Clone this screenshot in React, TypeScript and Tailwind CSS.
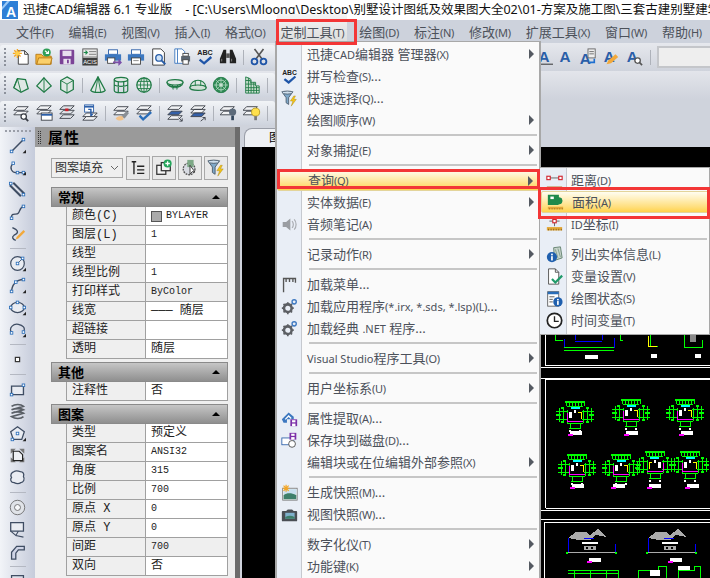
import type { ReactNode } from 'react';

const CJK = "font-['Noto_Sans','Noto_Sans_CJK_SC',sans-serif]";
const MONO = "font-['Liberation_Mono','Noto_Sans_CJK_SC',monospace]";

function Ic({ children, size = 20 }: { children: ReactNode; size?: number }) {
  return (
    <svg width={size} height={size} viewBox="0 0 20 20" fill="none" className="block shrink-0">
      {children}
    </svg>
  );
}

const G = '#1f7a45';
const B = '#2a5ea8';
const D = '#3b3f47';

// ---- 工具栏图标
const icons: Record<string, ReactNode> = {
  newDoc: (
    <>
      <path d="M7 3h7l4 4v11H7z" fill="#fff" stroke="#333" />
      <path d="M14 3v4h4" stroke="#333" />
      <path d="M6 1v10M1 6h10M2.5 2.5l7 7M9.5 2.5l-7 7" stroke="#f5a623" strokeWidth="1.5" />
      <circle cx="6" cy="6" r="2.4" fill="#ffcf4a" />
    </>
  ),
  open: (
    <>
      <path d="M1 7h6l2 2h9v9H1z" fill="#f6b73c" stroke="#b67a1a" />
      <path d="M2 18l2-7h15l-2 7z" fill="#fbd06b" stroke="#b67a1a" />
      <circle cx="13" cy="5" r="4.5" fill="#2f9e57" />
      <path d="M11 3l4 3M15 3v3h-3" stroke="#fff" strokeWidth="1.2" />
    </>
  ),
  save: (
    <>
      <rect x="2" y="2" width="16" height="16" rx="1" fill="#7b4397" />
      <rect x="5" y="3" width="10" height="6" fill="#e8e0ee" />
      <rect x="6" y="12" width="8" height="6" fill="#e8e0ee" />
      <rect x="10" y="13" width="2" height="4" fill="#7b4397" />
    </>
  ),
  acis: (
    <>
      <rect x="2" y="1" width="16" height="18" fill="#e8e8e8" stroke="#555" />
      <path d="M9 4h8M9 7h8M2 10h16" stroke="#777" />
      <path d="M3 5h4M5 3l2 2-2 2" stroke="#1d8a4b" strokeWidth="1.3" />
      <rect x="2" y="11" width="16" height="8" fill="#3e3e3e" />
      <text x="10" y="18" textAnchor="middle" fontSize="6.5" fill="#fff" fontFamily="Liberation Sans">
        ACIS
      </text>
    </>
  ),
  printGo: (
    <>
      <rect x="5" y="2" width="10" height="5" fill="#fff" stroke="#2a5ea8" />
      <path d="M1 7h18v7H1z" fill="#3d78c0" />
      <rect x="4" y="11" width="8" height="6" fill="#fff" stroke="#444" />
      <path d="M10 15h6v-3l4 4-4 4v-3h-6z" fill="#7b4fa8" />
    </>
  ),
  print: (
    <>
      <rect x="5" y="2" width="10" height="5" fill="#fff" stroke="#2a5ea8" />
      <path d="M1 7h18v7H1z" fill="#3d78c0" />
      <rect x="5" y="11" width="10" height="7" fill="#fff" stroke="#444" />
      <path d="M7 14h6" stroke="#888" />
    </>
  ),
  preview: (
    <>
      <path d="M3 1h9l4 4v14H3z" fill="#fff" stroke="#333" />
      <circle cx="10" cy="11" r="3.6" fill="#cfe3f7" stroke="#2a5ea8" strokeWidth="1.5" />
      <path d="M13 14l4 4" stroke="#2a5ea8" strokeWidth="2.2" />
    </>
  ),
  pageSetup: (
    <>
      <path d="M2 1h8l3 3v13H2z" fill="#fff" stroke="#3d78c0" />
      <path d="M5 1v16" stroke="#3d78c0" />
      <rect x="9" y="9" width="10" height="6" fill="#5b6672" />
      <rect x="11" y="13" width="6" height="5" fill="#fff" stroke="#444" />
      <rect x="11" y="6" width="6" height="3" fill="#fff" stroke="#444" />
    </>
  ),
  spell: (
    <>
      <text x="10" y="8" textAnchor="middle" fontSize="8" fontWeight="700" fill="#222" fontFamily="Liberation Sans">
        ABC
      </text>
      <path d="M4 13l5 4 8-7" stroke="#1f55a8" strokeWidth="2.6" />
    </>
  ),
  binoc: (
    <>
      <path d="M3 7l2-5h3v15H1v-5zM17 7l-2-5h-3v15h7v-5z" fill="#222" />
      <rect x="8" y="6" width="4" height="5" fill="#555" />
      <path d="M3 12v3M14 12v3" stroke="#888" />
    </>
  ),
  cut: (
    <>
      <path d="M5 1l9 12M15 1L6 13" stroke="#555" strokeWidth="1.8" />
      <circle cx="5" cy="15" r="3.2" stroke="#1f55a8" strokeWidth="2" />
      <circle cx="15" cy="15" r="3.2" stroke="#1f55a8" strokeWidth="2" />
    </>
  ),
  wedge: (
    <>
      <path d="M6 3l9 1 3 10-8 4-8-5z" fill="#dfe8e4" stroke={G} strokeWidth="1.4" />
      <path d="M6 3l4 15M6 3l-4 10" stroke={G} />
    </>
  ),
  pyr: (
    <>
      <path d="M10 2l8 9-8 7-8-7z" fill="#dfe8e4" stroke={G} strokeWidth="1.4" />
      <path d="M10 2v16" stroke={G} />
    </>
  ),
  cube: (
    <>
      <path d="M10 1l7 4v10l-7 4-7-4V5z" fill="#dfe8e4" stroke={G} strokeWidth="1.4" />
      <path d="M3 5l7 4 7-4M10 9v10" stroke={G} />
    </>
  ),
  cone: (
    <>
      <path d="M10 1L2 16c2 3 14 3 16 0z" fill="#dfe8e4" stroke={G} strokeWidth="1.4" />
      <path d="M10 1L7 18M10 1l3 17" stroke={G} />
    </>
  ),
  cyl: (
    <>
      <ellipse cx="10" cy="4" rx="7.5" ry="2.6" fill="#dfe8e4" stroke={G} strokeWidth="1.4" />
      <path d="M2.5 4v12c0 3.4 15 3.4 15 0V4M7 6v12M13 6v12M2.5 10c3 2 12 2 15 0" stroke={G} strokeWidth="1.3" />
    </>
  ),
  sphere: (
    <>
      <circle cx="10" cy="10" r="8" fill="#dfe8e4" stroke={G} strokeWidth="1.4" />
      <ellipse cx="10" cy="10" rx="4" ry="8" stroke={G} />
      <path d="M2 10h16M3 6h14M3 14h14M10 2v16" stroke={G} />
    </>
  ),
  dish: (
    <>
      <ellipse cx="10" cy="7" rx="9" ry="3" fill="#dfe8e4" stroke={G} strokeWidth="1.3" />
      <path d="M1 7c1 8 17 8 18 0M7 10l1 5M13 10l-1 5M2 10c4 2 12 2 16 0" stroke={G} strokeWidth="1.2" />
    </>
  ),
  dome: (
    <>
      <path d="M1 13c1-11 17-11 18 0z" fill="#dfe8e4" stroke={G} strokeWidth="1.3" />
      <ellipse cx="10" cy="13" rx="9" ry="3" fill="#cfe0d6" stroke={G} strokeWidth="1.3" />
      <path d="M7 5v6M13 5v6" stroke={G} />
    </>
  ),
  torus: (
    <>
      <circle cx="10" cy="10" r="8.5" fill="#2f8a55" stroke={G} />
      <circle cx="10" cy="10" r="5.5" stroke="#bfe0cc" />
      <circle cx="10" cy="10" r="2.5" fill="#dfe8e4" stroke={G} />
      <path d="M10 2v16M2 10h16M4 4l12 12M16 4L4 16" stroke="#bfe0cc" strokeWidth=".7" />
    </>
  ),
  mesh: (
    <>
      <path d="M3 1v18h15v-8h-4V7H8V3z" fill="#cfe3d5" stroke={G} />
      <path d="M3 5h5M3 9h11M3 13h15M3 16h15M6 2v17M9 4v15M12 7v12M15 11v8" stroke={G} />
    </>
  ),
  lZoom: (
    <>
      <path d="M6 3h12l-4 4H2zM6 8h12l-4 4H2z" fill="#f2f3f5" stroke={D} />
      <circle cx="13" cy="14" r="3" fill="#fff" stroke={D} strokeWidth="1.4" />
      <path d="M15 16l3 3" stroke={D} strokeWidth="2" />
    </>
  ),
  lForm: (
    <>
      <path d="M6 2h12l-4 4H2zM6 7h12l-4 4H2z" fill="#f2f3f5" stroke={D} />
      <rect x="7" y="10" width="12" height="8" fill="#fff" stroke={D} />
      <path d="M7 12h12" stroke={B} strokeWidth="2" />
    </>
  ),
  lRed: (
    <>
      <path d="M6 2h12l-4 4H2zM6 7h12l-4 4H2z" fill="#dfe2e7" stroke={D} />
      <path d="M6 12h12l-4 4H2z" fill="#dfe2e7" stroke={D} />
      <rect x="8" y="5" width="3.6" height="3" fill="#d0202a" />
    </>
  ),
  lBlue: (
    <>
      <rect x="4" y="1" width="10" height="8" fill="#fff" stroke={B} />
      <path d="M4 3h10" stroke={B} strokeWidth="2" />
      <path d="M6 10h12l-4 4H2z" fill="#f2f3f5" stroke={D} />
      <path d="M8 6h3v7l2-2" stroke={B} strokeWidth="1.6" />
      <path d="M6 14h12l-4 4H2z" fill="#f2f3f5" stroke={D} />
    </>
  ),
  lBrush: (
    <>
      <path d="M6 3h12l-4 4H2zM6 8h12l-4 4H2z" fill="#f2f3f5" stroke={D} />
      <path d="M10 14l6-6 3 2-5 6z" fill="#8a8f96" />
      <path d="M4 16c3-3 6-3 8-2l1 3c-3 2-6 2-9-1z" fill="#f2c28a" />
    </>
  ),
  lCheck: (
    <>
      <path d="M6 2h12l-4 4H2zM6 7h12l-4 4H2z" fill="#f2f3f5" stroke={D} />
      <path d="M5 13l4 4 9-8" stroke="#2a6db8" strokeWidth="2.6" />
    </>
  ),
  lFillA: (
    <>
      <path d="M6 2h12l-4 4H2z" fill="#f2f3f5" stroke={D} />
      <path d="M6 8h12l-4 4H2z" fill="#3560a8" stroke={D} />
      <path d="M6 13h12l-4 4H2z" fill="#f2f3f5" stroke={D} />
      <path d="M14 15l4 4M18 16v3h-3" stroke={D} />
    </>
  ),
  lFillB: (
    <>
      <path d="M6 2h12l-4 4H2zM6 6h12l-4 4H2z" fill="#f2f3f5" stroke={D} />
      <path d="M6 10h12l-4 4H2z" fill="#3560a8" stroke={D} />
      <path d="M13 19l5-4M15 15h3v3" stroke={D} />
    </>
  ),
  lBulbOff: (
    <>
      <path d="M4 3h12l-4 4H0zM4 8h12l-4 4H0z" fill="#f2f3f5" stroke={D} />
      <circle cx="14" cy="9" r="4" fill="#5c6a7a" />
      <rect x="12.5" y="13" width="3" height="5" fill="#32465c" />
    </>
  ),
  lBulbOn: (
    <>
      <path d="M4 3h12l-4 4H0zM4 8h12l-4 4H0z" fill="#f2f3f5" stroke={D} />
      <circle cx="14" cy="9" r="4.5" fill="#ffe04d" stroke="#b89a20" />
      <rect x="12.5" y="13.5" width="3" height="4.5" fill="#777" />
    </>
  ),
  aUnder: (
    <>
      <text x="10" y="15" textAnchor="middle" fontSize="17" fontWeight="700" fill={B} fontFamily="Liberation Sans">
        A
      </text>
      <path d="M0 18h20" stroke="#222" />
    </>
  ),
  a: (
    <text x="10" y="16" textAnchor="middle" fontSize="17" fontWeight="700" fill={B} fontFamily="Liberation Sans">
      A
    </text>
  ),
  aDoc: (
    <>
      <text x="7" y="18" textAnchor="middle" fontSize="17" fontWeight="700" fill={B} fontFamily="Liberation Sans">
        A
      </text>
      <rect x="10" y="1" width="8" height="10" fill="#eee" stroke="#666" />
      <path d="M11.5 4h5M11.5 6.5h5" stroke="#666" />
      <path d="M17 12v4h-5" stroke="#1f6fd0" strokeWidth="1.8" />
    </>
  ),
  aPen: (
    <>
      <text x="8" y="16" textAnchor="middle" fontSize="17" fontWeight="700" fill={B} fontFamily="Liberation Sans">
        A
      </text>
      <path d="M5 18l2-4 8-7 3 3-8 7z" fill="#f2a93c" />
    </>
  ),
  aZoom: (
    <>
      <text x="8" y="15" textAnchor="middle" fontSize="17" fontWeight="700" fill={B} fontFamily="Liberation Sans">
        A
      </text>
      <circle cx="14" cy="14" r="3" fill="#fff" stroke="#555" strokeWidth="1.4" />
      <path d="M16 16l3 3" stroke="#555" strokeWidth="1.8" />
    </>
  ),
};

// 左侧绘图工具栏图标
const P = '#3f4d63';
const N = ({ x, y }: { x: number; y: number }) => <rect x={x - 1.5} y={y - 1.5} width="3" height="3" fill="#fff" stroke="#2a6db8" />;
const Mark = () => <path d="M16 19h4v-4z" fill="#222" />;

const drawIcons: Record<string, ReactNode> = {
  line: (<><path d="M3 17L17 3" stroke={P} strokeWidth="1.8" /><N x={3} y={17} /><N x={17} y={3} /><Mark /></>),
  poly: (<><path d="M4 6c-4 5 0 10 4 10h8" stroke={P} strokeWidth="1.5" /><N x={5} y={5} /><N x={10} y={16} /><N x={17} y={16} /><Mark /></>),
  dbl: (<><path d="M1 5l13 13M5 2l13 13" stroke={P} strokeWidth="2.4" /><N x={2} y={3} /><N x={17} y={16} /></>),
  spline: (<><path d="M3 18c-1-8 6-3 8-6s2-7 6-8" stroke={P} strokeWidth="1.6" /><N x={17} y={4} /><N x={3} y={18} /></>),
  sketch: (<><path d="M4 3c7 3 8 6 2 9-3 2-2 5 2 6" stroke={P} strokeWidth="1.6" /><path d="M9 14l8-8 2 2-8 8-3 1z" fill="#f2a93c" /></>),
  circle: (<><circle cx="10" cy="10" r="8" fill="#e9ecf2" stroke={P} strokeWidth="1.4" /><path d="M10 10l5-5" stroke={P} /><N x={10} y={10} /><N x={16} y={4} /><Mark /></>),
  arc: (<><path d="M3 18C3 9 9 3 17 3" stroke={P} strokeWidth="1.6" /><N x={3} y={17} /><N x={8} y={6} /><N x={17} y={3} /><Mark /></>),
  ell: (<><ellipse cx="10" cy="10" rx="8" ry="6" fill="#e9ecf2" stroke={P} strokeWidth="1.5" /><N x={10} y={4} /><N x={2} y={10} /><N x={18} y={10} /><Mark /></>),
  ellArc: (<><path d="M3 14C-1 7 6 3 11 4c5 1 9 4 6 9" stroke={P} strokeWidth="1.5" /><N x={3} y={14} /><N x={17} y={13} /><Mark /></>),
  point: <rect x="7.5" y="7.5" width="5" height="5" fill="#fff" stroke="#333" strokeWidth="1.4" />,
  rect: (<><path d="M3 6h14v10H3z" fill="#e9ecf2" stroke={P} strokeWidth="1.6" /><N x={17} y={5} /><N x={3} y={16} /></>),
  helix: (<path d="M3 4c4-3 11-3 14 0L3 8c4-2 11-2 14 0L3 12c4-2 11-2 14 0L3 16c4 3 11 3 14 0" stroke="#5a5f66" strokeWidth="2" />),
  penta: (<><path d="M10 2l8 6-3 9H5L2 8z" fill="#e9ecf2" stroke={P} strokeWidth="1.5" /><N x={10} y={10} /><N x={4} y={17} /><Mark /></>),
  hatch: (<><path d="M2 2l6 0-6 6zM12 2h6v6M2 12v6h6M18 12v6h-6" fill="#777" /><path d="M5 5h7l4 4v7H5z" fill="#eef0f4" stroke="#222" strokeWidth="1.4" /></>),
  cloud: (<path d="M6 3c3-2 5 0 7 0 4 0 5 3 4 6 2 3 0 7-3 7-3 2-6 1-8 0-4 0-5-4-3-6-2-3 0-6 3-7z" fill="#e9ecf2" stroke={P} strokeWidth="1.5" />),
  donut: (<><circle cx="10" cy="10" r="8.5" fill="#e0e3e8" stroke="#666" /><circle cx="10" cy="10" r="3.5" fill="#f7f8fa" stroke="#666" /></>),
  lead: (<><path d="M2 2h15v10H2z" fill="#e9ecf2" stroke={P} strokeWidth="1.5" /><path d="M2 12l6 5 3-5M8 17l9 2" stroke={P} strokeWidth="1.3" /></>),
  pipe: (<path d="M3 19V11l6-7h9v4h-7l-3 4v7z" fill="#cfd4e6" stroke={P} strokeWidth="1.5" />),
  next: <path d="M3 3h14v14H3z" stroke={P} strokeWidth="1.5" />,
};

const row1 = ['newDoc', 'open', 'save', 'acis', 'printGo', 'print', 'preview', 'pageSetup', 'spell', 'binoc', '|', 'cut'];
const row2 = ['wedge', 'pyr', 'cube', '|', 'cone', 'cyl', 'sphere', '|', 'dish', 'dome', 'torus', '|', 'mesh', '|'];
const row3 = ['lZoom', 'lForm', 'lRed', 'lBlue', '|', 'lBrush', 'lCheck', '|', 'lFillA', 'lFillB', '|', 'lBulbOff', 'lBulbOn', '|'];

function Toolbar({ items }: { items: string[] }) {
  return (
    <div className="flex h-[24px] w-[275px] shrink-0 items-center rounded-[3px] bg-gradient-to-b from-[#f2f4f7] to-[#cfd4de] pl-[4px]">
      <div className="mr-[3px] h-[18px] border-l-2 border-dotted border-[#8c919b]" />
      {items.map((k, i) =>
        k === '|' ? (
          <div key={i} className="flex w-[8px] justify-center">
            <div className="h-[15px] w-px bg-[#aeb2ba]" />
          </div>
        ) : (
          <div key={i} className="flex w-[23px] justify-center">
            <Ic size={18}>{icons[k]}</Ic>
          </div>
        ),
      )}
    </div>
  );
}

// 西文部分字号小一点，跟原界面一样
function Lab({ zh, k, after }: { zh: string; k?: string; after?: string }) {
  const parts = zh.split(/([\x21-\x7e][\x20-\x7e]*[\x21-\x7e]|[\x21-\x7e])/);
  return (
    <span className={`relative whitespace-nowrap text-[13px] leading-none text-[#4c515a] ${CJK}`}>
      {parts.map((p, i) =>
        i % 2 === 1 ? (
          <span key={i} className="text-[11px]">
            {p}
          </span>
        ) : (
          p
        ),
      )}
      {k && <span className="text-[11px] tracking-[-0.3px]">({k})</span>}
      {after}
    </span>
  );
}

const menuBar: [string, string][] = [
  ['文件', 'F'],
  ['编辑', 'E'],
  ['视图', 'V'],
  ['插入', 'I'],
  ['格式', 'O'],
  ['定制工具', 'T'],
  ['绘图', 'D'],
  ['标注', 'N'],
  ['修改', 'M'],
  ['扩展工具', 'X'],
  ['窗口', 'W'],
  ['帮助', 'H'],
];

// ---- 菜单图标
const menuIcons: Record<string, ReactNode> = {
  spell: icons.spell,
  filter: (
    <>
      <path d="M1 2h13l-5 7v8l-3-2V9z" fill="#7fa8c9" stroke="#4a5a6a" />
      <ellipse cx="7.5" cy="3" rx="6" ry="1.8" fill="#cfe0ee" stroke="#4a5a6a" />
      <path d="M15 7l-4 6h3l-2 6 6-8h-3l2-4z" fill="#f5c518" stroke="#a88510" strokeWidth=".5" />
    </>
  ),
  sound: (
    <>
      <path d="M2 7h4l5-4v14l-5-4H2z" fill="#9a9da2" />
      <path d="M13 6c2 2 2 6 0 8M15.5 4c3 3 3 9 0 12" stroke="#a9acb1" strokeWidth="1.4" />
    </>
  ),
  flag: <path d="M3 19V3h14v5M6 3v4M10 3v4M14 3v4M3 3v3" stroke="#555" strokeWidth="1.6" />,
  gear: (
    <>
      <circle cx="8" cy="12" r="4.5" fill="none" stroke="#5c5f64" strokeWidth="3" />
      <path d="M8 5v3M8 16v3M1 12h3M12 12h3M3 7l2 2M13 7l-2 2M3 17l2-2M13 17l-2-2" stroke="#5c5f64" strokeWidth="2" />
      <circle cx="15.5" cy="4.5" r="2.5" stroke="#3d78c0" strokeWidth="1.6" />
    </>
  ),
  attr: (
    <>
      <path d="M1 11l8-8 6 5v3H7v4H3z" fill="#3d78c0" />
      <path d="M5 11l4-4 3 3" stroke="#fff" strokeWidth="1.5" />
      <rect x="11" y="11" width="8" height="8" fill="#7b2fa8" />
      <rect x="13" y="12" width="4" height="2.5" fill="#fff" />
      <rect x="13" y="16" width="4" height="3" fill="#fff" />
    </>
  ),
  saveBlock: (
    <>
      <rect x="1" y="7" width="14" height="8" fill="#fff" stroke="#2a5ea8" />
      <circle cx="13" cy="14" r="4" fill="#fff" stroke="#444" />
      <rect x="10" y="1" width="8" height="8" fill="#7b2fa8" />
      <rect x="12" y="2" width="4" height="2.5" fill="#fff" />
      <rect x="12" y="6" width="4" height="3" fill="#fff" />
    </>
  ),
  snap: (
    <>
      <rect x="2" y="5" width="17" height="14" fill="#fff" stroke="#777" />
      <rect x="3" y="6" width="15" height="6" fill="#c9e0ef" />
      <path d="M3 13c4-3 9-3 15 0v5H3z" fill="#3e7f6a" />
      <path d="M6 1v8M2 5h8M3 2l6 6M9 2L3 8" stroke="#f5a623" strokeWidth="1.4" />
    </>
  ),
  camera: (
    <>
      <path d="M2 6h4l2-2h5l2 2h3a1 1 0 011 1v10a1 1 0 01-1 1H2a1 1 0 01-1-1V7a1 1 0 011-1z" fill="#4a4e54" />
      <rect x="5" y="8" width="11" height="7" fill="#7fb0cc" />
      <path d="M5 13c4-2 7-2 11 0v2H5z" fill="#3e7f6a" />
    </>
  ),
  dist: (
    <>
      <path d="M3 7h14" stroke="#555" />
      <rect x="1" y="5" width="4" height="4" fill="#fff" stroke="#d0202a" strokeWidth="1.3" />
      <rect x="15" y="5" width="4" height="4" fill="#fff" stroke="#d0202a" strokeWidth="1.3" />
      <rect x="1" y="17" width="18" height="3" fill="#b98a45" />
    </>
  ),
  area: (
    <>
      <path d="M1 1h13v3a4 4 0 010 8l-1 1H1z" fill="#1f8a4b" />
      <circle cx="14" cy="8" r="4" fill="#1f8a4b" />
      <rect x="4" y="3" width="4" height="3" fill="#fff" />
      <rect x="1" y="15" width="18" height="3" fill="#e4a83a" />
      <path d="M3 18v-1M6 18v-1M9 18v-1M12 18v-1M15 18v-1M18 18v-1" stroke="#7a5a1a" />
    </>
  ),
  id: (
    <>
      <path d="M10 0v12M4 6h12" stroke="#555" />
      <rect x="8" y="4" width="4" height="4" fill="#fff" stroke="#d0202a" strokeWidth="1.3" />
      <rect x="1" y="13" width="18" height="4" fill="#e4a83a" />
      <path d="M3 17v-2M6 17v-2M9 17v-2M12 17v-2M15 17v-2M18 17v-2" stroke="#7a5a1a" />
    </>
  ),
  list: (
    <>
      <path d="M9 2l8-1 2 13-9 3z" fill="#c8d4cc" stroke="#5a7a66" />
      <path d="M11 4l3 10M14 3l3 10" stroke="#7a9a86" />
      <circle cx="7" cy="13" r="6" fill="#1f5fae" />
      <rect x="6" y="12" width="2" height="5" fill="#fff" />
      <rect x="6" y="9" width="2" height="2" fill="#fff" />
    </>
  ),
  varDoc: (
    <>
      <path d="M3 1h8l4 4v14H3z" fill="#fff" stroke="#444" />
      <path d="M11 1v4h4" stroke="#444" />
      <path d="M7 13l4 4 8-8" stroke="#1f9a6a" strokeWidth="2.6" />
    </>
  ),
  status: (
    <>
      <rect x="2" y="2" width="13" height="17" fill="#fff" stroke="#555" />
      <rect x="2" y="2" width="13" height="3" fill="#2a6db8" />
      <path d="M4 8h6M4 11h4M4 14h4" stroke="#444" />
      <circle cx="14" cy="14" r="5.5" fill="#1f5fae" />
      <rect x="13" y="13" width="2" height="4.5" fill="#fff" />
      <rect x="13" y="10.5" width="2" height="1.7" fill="#fff" />
    </>
  ),
  clock: (
    <>
      <circle cx="10" cy="10" r="8.5" fill="#fff" stroke="#222" strokeWidth="2" />
      <path d="M10 5v6h5" stroke="#222" strokeWidth="1.6" />
    </>
  ),
};

type Item = { zh?: string; k?: string; after?: string; arrow?: boolean; icon?: string; on?: boolean; sep?: boolean };

const mainMenu: Item[] = [
  { zh: '迅捷CAD编辑器 管理器', k: 'X', arrow: true },
  { zh: '拼写检查', k: 'S', after: '...', icon: 'spell' },
  { zh: '快速选择', k: 'Q', after: '...', icon: 'filter' },
  { zh: '绘图顺序', k: 'W', arrow: true },
  { sep: true },
  { zh: '对象捕捉', k: 'E', arrow: true },
  { sep: true },
  { zh: '查询', k: 'Q', arrow: true, on: true },
  { zh: '实体数据', k: 'E', arrow: true },
  { zh: '音频笔记', k: 'A', icon: 'sound' },
  { sep: true },
  { zh: '记录动作', k: 'R', arrow: true },
  { sep: true },
  { zh: '加载菜单', after: '...', icon: 'flag' },
  { zh: '加载应用程序(*.irx, *.sds, *.lsp)', k: 'L', after: '...', icon: 'gear' },
  { zh: '加载经典 .NET 程序', after: '...', icon: 'gear' },
  { sep: true },
  { zh: 'Visual Studio程序工具', k: 'O', arrow: true },
  { sep: true },
  { zh: '用户坐标系', k: 'U', arrow: true },
  { sep: true },
  { zh: '属性提取', k: 'A', after: '...', icon: 'attr' },
  { zh: '保存块到磁盘', k: 'D', after: '...', icon: 'saveBlock' },
  { zh: '编辑块或在位编辑外部参照', k: 'X', arrow: true },
  { sep: true },
  { zh: '生成快照', k: 'M', after: '...', icon: 'snap' },
  { zh: '视图快照', k: 'W', after: '...', icon: 'camera' },
  { sep: true },
  { zh: '数字化仪', k: 'T', arrow: true },
  { zh: '功能键', k: 'K', arrow: true },
];

const subMenu: Item[] = [
  { zh: '距离', k: 'D', icon: 'dist' },
  { zh: '面积', k: 'A', icon: 'area', on: true },
  { zh: 'ID坐标', k: 'I', icon: 'id' },
  { sep: true },
  { zh: '列出实体信息', k: 'L', icon: 'list' },
  { zh: '变量设置', k: 'V', icon: 'varDoc' },
  { zh: '绘图状态', k: 'S', icon: 'status' },
  { zh: '时间变量', k: 'T', icon: 'clock' },
];

function MenuList({ items, gutter, textPad }: { items: Item[]; gutter: string; textPad: string }) {
  return (
    <>
      {items.map((it, i) =>
        it.sep ? (
          <div key={i} className="flex h-[8px] items-center">
            <div className="ml-[32px] mr-[2px] h-[2px] flex-1 bg-[#c6c6c6]" />
          </div>
        ) : (
          <div
            key={i}
            className={`relative flex h-[22px] items-center ${it.on ? 'rounded-[2px] border border-[#e3d49a] bg-gradient-to-b from-[#fffdf0] via-[#ffe9a3] to-[#ffd348]' : ''}`}
          >
            <div className={`flex h-full shrink-0 items-center justify-center ${gutter}`}>
              {it.icon && <Ic size={17}>{menuIcons[it.icon]}</Ic>}
            </div>
            <div className={`pb-[3px] ${textPad}`}>
              <Lab zh={it.zh ?? ''} k={it.k} after={it.after} />
            </div>
            {it.arrow && <div className="absolute right-[5px] top-[6px] h-0 w-0 border-y-[5px] border-l-[5px] border-y-transparent border-l-[#555a62]" />}
          </div>
        ),
      )}
    </>
  );
}

function PanelBtn({ children }: { children: ReactNode }) {
  return <div className="flex h-[24px] w-[24px] items-center justify-center border border-[#a8a8a8] bg-[#e9e9e9]">{children}</div>;
}

function Section({ title }: { title: string }) {
  return (
    <div className={`relative flex h-[20px] items-center border border-[#8a8a8a] bg-gradient-to-b from-[#c6c6c6] to-[#8f8f8f] pl-[6px] text-[13px] leading-none font-bold text-black ${CJK}`}>
      {title}
      <div className="absolute right-[7px] top-[7px] h-0 w-0 border-x-[4px] border-b-[4px] border-x-transparent border-b-black" />
    </div>
  );
}

function Prop({ label, value, grey, swatch, zhValue }: { label: string; value?: string; grey?: boolean; swatch?: boolean; zhValue?: boolean }) {
  return (
    <div className="ml-[15px] flex h-[19px] border-b border-[#a0a0a0]">
      <div className={`flex w-[80px] items-center border-x border-[#a0a0a0] pl-[5px] text-[12px] leading-none whitespace-pre text-[#222] ${MONO}`}>{label}</div>
      <div className={`flex flex-1 items-center gap-[4px] border-r border-[#a0a0a0] pl-[5px] leading-none text-[#222] ${grey ? 'bg-[#efefef]' : 'bg-white'} ${zhValue ? 'text-[12px]' : 'text-[10px]'} ${MONO}`}>
        {swatch && <span className="h-[11px] w-[11px] border border-[#555] bg-[#aaaaaa]" />}
        {value}
      </div>
    </div>
  );
}

const leftTools = ['line', 'poly', 'dbl', 'spline', 'sketch', '|', 'circle', 'arc', 'ell', 'ellArc', '|', 'point', '|', 'rect', 'helix', 'penta', 'hatch', 'cloud', '|', 'donut', 'lead', 'pipe', '|', 'next'];

// 平面图小图块
function Plan({ x, y, flip }: { x: number; y: number; flip?: boolean }) {
  return (
    <g transform={`translate(${x} ${y}) scale(${flip ? -1 : 1} 1)`} shapeRendering="crispEdges" fill="none">
      <path d="M-19-4h12M7-4h12M-19 4h12M7 4h12M-16-7v14M-12-6v12M16-7v14M12-6v12M-8-9H8M-8-5V8M8-5V8M-8 8H8M-5 8v5M5 8v5M-6 13H6M-9-13v4M-6-13v4M-3-13v4M0-13v4M3-13v4M6-13v4M9-13v4" stroke="#00ff00" />
      <path d="M-10-13H10M-19 0h5M14 0h5M-14-7h3M11-7h3M-14 7h3M11 7h3" stroke="#00ff00" strokeWidth="2" />
      <path d="M-4-7H5" stroke="#00ffff" strokeWidth="2" />
      <path d="M-8 6H8M-8-2V6" stroke="#ff00ff" />
      <path d="M3-3h3v7" stroke="#ffff00" />
      <rect x="-6" y="-3" width="3" height="6" fill="#fff" />
      <rect x="-1" y="-5" width="2" height="3" fill="#fff" />
      <rect x="-6" y="15" width="2" height="2" fill="#fff" />
      <rect x="4" y="15" width="2" height="2" fill="#fff" />
    </g>
  );
}

function Tag({ x, y }: { x: number; y: number }) {
  return (
    <g shapeRendering="crispEdges">
      <rect x={x - 5} y={y - 2} width="12" height="4" fill="#fff" />
      <rect x={x - 7} y={y + 1} width="5" height="1.5" fill="#ff00ff" />
    </g>
  );
}

function Elev({ x, y }: { x: number; y: number }) {
  return (
    <g transform={`translate(${x} ${y})`} shapeRendering="crispEdges">
      <path d="M-24-5l8-6 10 0 4 3 8-6 8 8-10-2-6 5h-12z" fill="#aaaaaa" />
      <path d="M-24 9V-5M23 9V1M-8-5H2" stroke="#0000ff" />
      <path d="M-26 9h50" stroke="#aaaaaa" />
      <rect x="-8" y="3" width="12" height="4" fill="#aaaaaa" />
      <path d="M-10 0H6" stroke="#fff" strokeWidth="2" />
      <rect x="-6" y="4" width="2" height="2" fill="#000" />
      <rect x="-1" y="4" width="2" height="2" fill="#000" />
      <path d="M-26 10h2M23 10h2" stroke="#00ff00" strokeWidth="2" />
    </g>
  );
}

function Canvas() {
  return (
    <svg width="468" height="431" viewBox="242 147 468 431" className="block">
      <rect x="242" y="147" width="468" height="431" fill="#000" />
      <g fill="none" stroke="#fff" shapeRendering="crispEdges">
        <path d="M545.5 335v30h165M541 367.5h169M541 378.5h169M545.5 508V379.5h165M545.5 508.5h165M541 510.5h169M541 519.5h169M544.5 578V522.5h166" />
      </g>
      <g fill="none" shapeRendering="crispEdges">
        <path d="M564 339v8h50v-9M575 335v5M602 335v5M575 341h27" stroke="#0000ff" />
        <path d="M564 347h50M564 350h50M555 335v5h8M620 335v5h3M650 335v11h8" stroke="#00ff00" />
        <path d="M648 336v10h9" stroke="#ffff00" />
        <path d="M684 335v12h18v-7" stroke="#00ff00" />
        <rect x="690" y="335" width="6" height="7" fill="#888" stroke="none" />
        <rect x="585" y="355" width="13" height="4" fill="#fff" stroke="none" />
        <rect x="651" y="354" width="6" height="4" fill="#fff" stroke="none" />
        <rect x="695" y="354" width="6" height="4" fill="#fff" stroke="none" />
      </g>
      <Plan x={575} y={415} />
      <Plan x={631} y={413} />
      <Plan x={685} y={413} />
      <Plan x={577} y={468} />
      <Plan x={621} y={468} />
      <Plan x={655} y={465} flip />
      <Plan x={690} y={465} />
      <Tag x={575} y={433} />
      <Tag x={631} y={433} />
      <Tag x={686} y={433} />
      <Tag x={577} y={486} />
      <Tag x={618} y={486} />
      <Tag x={654} y={486} />
      <Tag x={692} y={486} />
      <Elev x={592} y={543} />
      <Elev x={672} y={543} />
      <Tag x={594} y={560} />
      <Tag x={675} y={560} />
      <path d="M568 570h50v8M568 573h50M574 570v8M590 570v8M606 570v8" stroke="#00ff00" fill="none" shapeRendering="crispEdges" />
      <path d="M638 578v-8h20v-4h8v12M678 578v-8h16v-4h6v12" stroke="#00ff00" fill="none" shapeRendering="crispEdges" />
      <rect x="650" y="570" width="10" height="6" fill="#fff" />
      <rect x="678" y="566" width="12" height="4" fill="#fff" />
    </svg>
  );
}

export default function App() {
  return (
    <div className={`relative flex h-[578px] w-[710px] flex-col overflow-hidden bg-[#cfd3dc] ${CJK}`}>
      {/* 标题栏 */}
      <div className="flex h-[20px] shrink-0 items-center bg-white pl-[2px]">
        <svg width="16" height="18" viewBox="0 0 16 18" className="mr-[5px] shrink-0">
          <rect width="16" height="18" fill="#2f7fd6" />
          <path d="M0 6l5-6h3L0 9z" fill="#9ccaf5" />
          <text x="9" y="16" textAnchor="middle" fontSize="14" fontWeight="700" fill="#fff" fontFamily="Liberation Sans">
            A
          </text>
        </svg>
        <span className="whitespace-pre text-[12.5px] leading-none text-[#111]">迅捷CAD编辑器 6.1 专业版    - [C:\Users\Mloong\Desktop\别墅设计图纸及效果图大全02\01-方案及施工图\三套古建别墅建筑图</span>
      </div>

      {/* 菜单栏 */}
      <div className="flex h-[23px] shrink-0 items-center gap-[15px] bg-[#cdd2dc] pb-[2px] pl-[16px]">
        {menuBar.map(([zh, k]) => (
          <div key={k} className="relative">
            {k === 'T' && <div className="absolute -inset-x-[3px] -bottom-[5px] -top-[5px] bg-gradient-to-b from-[#f4f4f4] to-[#d8d8d8]" />}
            <Lab zh={zh} k={k} />
          </div>
        ))}
      </div>

      {/* 工具栏 */}
      <div className="flex h-[28px] shrink-0 items-center bg-gradient-to-b from-[#e6e8ed] to-[#cfd3dc]">
        <Toolbar items={row1} />
        <div className="ml-[266px] flex h-[24px] items-center">
          <div className="w-[12px] overflow-hidden">
            <div className="-ml-[6px]">
              <Ic size={18}>{icons.aUnder}</Ic>
            </div>
          </div>
          {['a', 'aDoc', 'aPen', 'aZoom'].map((k) => (
            <div key={k} className="flex w-[23px] justify-center">
              <Ic size={18}>{icons[k]}</Ic>
            </div>
          ))}
          <div className="ml-[5px] h-[15px] w-px bg-[#aeb2ba]" />
          <div className="ml-[6px] h-[22px] w-[60px] border-2 border-[#c4c6ca] bg-[#eeeeee]" />
        </div>
      </div>
      <div className="flex h-[28px] shrink-0 items-center bg-gradient-to-b from-[#e3e5eb] to-[#cfd3dc]">
        <Toolbar items={row2} />
      </div>
      <div className="flex h-[28px] shrink-0 items-center">
        <Toolbar items={row3} />
      </div>

      {/* 主区域 */}
      <div className="flex min-h-0 flex-1">
        {/* 左侧绘图工具 */}
        <div className="flex w-[35px] shrink-0 flex-col items-center overflow-hidden bg-gradient-to-r from-[#f2f4f8] to-[#c6ccdb] pt-[3px]">
          <div className="mb-[2px] w-[26px] border-t-2 border-dotted border-[#9a9ea8]" />
          {leftTools.map((k, i) =>
            k === '|' ? (
              <div key={i} className="flex h-[8px] shrink-0 items-center">
                <div className="h-px w-[16px] bg-[#b4b8c2]" />
              </div>
            ) : (
              <div key={i} className="flex h-[22px] shrink-0 items-center justify-center">
                <Ic size={17}>{drawIcons[k]}</Ic>
              </div>
            ),
          )}
        </div>

        {/* 属性面板 */}
        <div className="flex w-[200px] shrink-0 flex-col bg-[#efefef]">
          <div className="flex h-[20px] shrink-0 items-center bg-[#9a9a9a] pl-[3px]">
            <div className="mr-[7px] h-[13px] w-[3px] border-x border-dotted border-[#333]" />
            <span className="text-[15px] leading-none font-bold tracking-[1px] text-black">属性</span>
          </div>
          <div className="flex flex-col pl-[16px] pr-[7px] pt-[9px]">
            <div className="flex h-[24px] items-center gap-[2px]">
              <div className="mr-px flex h-[20px] w-[72px] items-center justify-between border border-[#a8a8a8] bg-[#efefef] px-[3px] text-[12px] leading-none text-[#333]">
                图案填充
                <svg width="9" height="6" viewBox="0 0 9 6">
                  <path d="M1 1l3.5 3.5L8 1" stroke="#666" fill="none" />
                </svg>
              </div>
              <PanelBtn>
                <Ic size={18}>
                  <path d="M3 3h5M5.5 3v14M9 8h8M9 12h8M9 16h8" stroke="#222" strokeWidth="1.5" />
                </Ic>
              </PanelBtn>
              <PanelBtn>
                <Ic size={18}>
                  <rect x="2" y="7" width="10" height="10" fill="#f4f4f4" stroke="#333" strokeWidth="1.4" />
                  <rect x="7" y="4" width="10" height="9" fill="#f4f4f4" stroke="#333" strokeWidth="1.4" />
                  <circle cx="14" cy="5" r="4.5" fill="#23a55a" />
                  <path d="M14 2.5v5M11.5 5h5" stroke="#fff" strokeWidth="1.4" />
                </Ic>
              </PanelBtn>
              <PanelBtn>
                <Ic size={18}>
                  <circle cx="9" cy="11" r="6.5" stroke="#555" strokeDasharray="2 1" strokeWidth="1.5" fill="#d8dbe2" />
                  <rect x="7" y="1" width="7" height="8" fill="#7ea987" />
                  <path d="M10 7v10l2.5-3 3 .5z" fill="#fff" stroke="#333" />
                </Ic>
              </PanelBtn>
              <PanelBtn>
                <Ic size={18}>{menuIcons.filter}</Ic>
              </PanelBtn>
            </div>

            <div className="mt-[7px]">
              <Section title="常规" />
              <Prop label="颜色(C)" value="BYLAYER" swatch />
              <Prop label="图层(L)" value="1" />
              <Prop label="线型" />
              <Prop label="线型比例" value="1" />
              <Prop label="打印样式" value="ByColor" grey />
              <Prop label="线宽" value="——— 随层" zhValue />
              <Prop label="超链接" />
              <Prop label="透明" value="随层" zhValue />
            </div>
            <div className="mt-[3px]">
              <Section title="其他" />
              <Prop label="注释性" value="否" zhValue />
            </div>
            <div className="mt-[3px]">
              <Section title="图案" />
              <Prop label="类型" value="预定义" zhValue />
              <Prop label="图案名" value="ANSI32" />
              <Prop label="角度" value="315" />
              <Prop label="比例" value="700" />
              <Prop label="原点 X" value="0" />
              <Prop label="原点 Y" value="0" />
              <Prop label="间距" value="700" grey />
              <Prop label="双向" value="否" zhValue />
            </div>
          </div>
        </div>
        <div className="w-[5px] shrink-0 bg-[#6c6c6c]" />

        {/* 绘图区 */}
        <div className="flex min-w-0 flex-1 flex-col bg-[#cfd3dc] pl-[2px]">
          <div className="flex h-[20px] shrink-0 items-end pl-[2px]">
            <div className="flex h-[19px] items-center rounded-tl-[8px] border-l border-t border-[#9a9ea8] bg-[#eef0f4] pl-[24px] pr-[6px] text-[12px] leading-none text-black">图</div>
          </div>
          <Canvas />
        </div>
      </div>

      {/* 定制工具 下拉菜单 */}
      <div className="absolute left-[275px] top-[41px] h-[537px] w-[266px] border-x-2 border-t border-x-[#a8a8a8] border-t-[#a8a8a8] bg-[linear-gradient(to_right,#e9eef6_24px,#fafafa_24px)] pt-[1px]">
        <div className="absolute bottom-0 left-[24px] top-0 w-px bg-[#c6c9cf]" />
        <div className="relative">
          <MenuList items={mainMenu} gutter="w-[24px]" textPad="pl-[6px]" />
        </div>
      </div>

      {/* 查询 子菜单 */}
      <div className="absolute left-[539px] top-[167px] h-[168px] w-[171px] border border-[#a8a8a8] bg-[linear-gradient(to_right,#e9eef6_26px,#fafafa_26px)] pl-px pt-[1px]">
        <div className="absolute bottom-0 left-[26px] top-0 w-px bg-[#c6c9cf]" />
        <div className="relative">
          <MenuList items={subMenu} gutter="w-[26px]" textPad="pl-[4px]" />
        </div>
      </div>

      {/* 标注红框 */}
      <div className="absolute left-[276px] top-[19px] h-[26px] w-[81px] border-[3px] border-[#f33636]" />
      <div className="absolute left-[277px] top-[169px] h-[20px] w-[263px] border-[3px] border-[#f33636]" />
      <div className="absolute left-[538px] top-[187px] h-[32px] w-[172px] border-[3px] border-[#f33636]" />
    </div>
  );
}
